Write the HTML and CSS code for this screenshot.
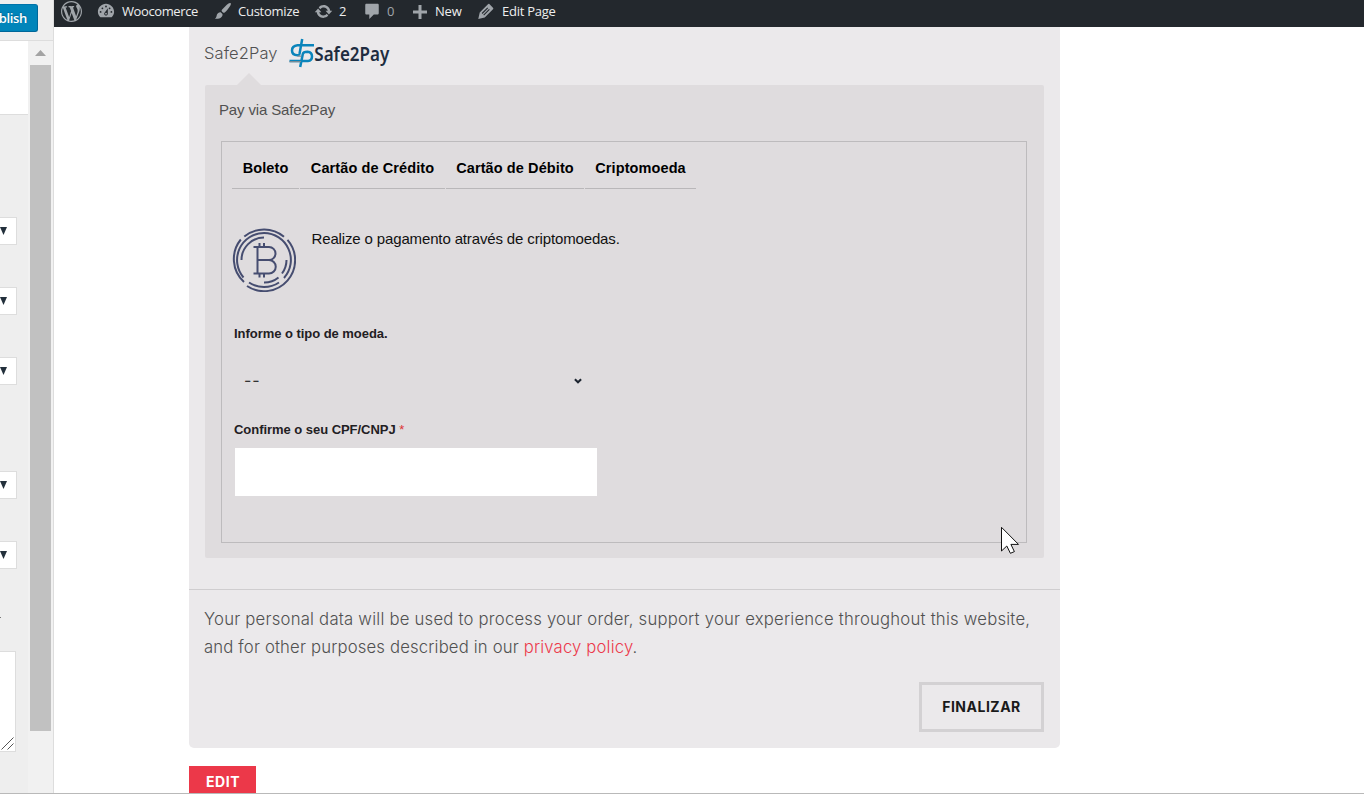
FILE: index.html
```html
<!DOCTYPE html>
<html lang="pt-BR">
<head>
<meta charset="utf-8">
<title>Checkout – Woocomerce</title>
<link rel="stylesheet" href="styles.css">
</head>
<body>
<div class="app">
  <aside class="sidebar">
    <header class="side-head"><button class="publish">Publish</button></header>
    <div class="side-body">
      <div class="controls">
        <div class="intro"></div>
        <div class="select s1"><svg viewBox="0 0 7 8"><path d="M0 0h7L3.5 8z"/></svg></div>
        <div class="select s2"><svg viewBox="0 0 7 8"><path d="M0 0h7L3.5 8z"/></svg></div>
        <div class="select s2"><svg viewBox="0 0 7 8"><path d="M0 0h7L3.5 8z"/></svg></div>
        <div class="select s3"><svg viewBox="0 0 7 8"><path d="M0 0h7L3.5 8z"/></svg></div>
        <div class="select s2"><svg viewBox="0 0 7 8"><path d="M0 0h7L3.5 8z"/></svg></div>
        <div class="hint"></div>
        <div class="textarea"><svg viewBox="0 0 13 13"><path d="M.5 12.5l12-12M6.500 12.500l6-6"/></svg></div>
      </div>
      <div class="scroll">
        <svg class="up" viewBox="0 0 11 6"><path d="M0 6L5.500 0 11 6z"/></svg>
        <div class="thumb"></div>
      </div>
    </div>
  </aside>
  <div class="preview">
    <nav class="adminbar">
      <svg class="ic wp" viewBox="0 0 20 20"><path d="M20 10c0-5.510-4.490-10-10-10C4.480 0 0 4.490 0 10c0 5.520 4.480 10 10 10 5.510 0 10-4.480 10-10zM7.780 15.370L4.370 6.220c.55-.02 1.170-.08 1.170-.08.5-.06.44-1.130-.06-1.110 0 0-1.450.11-2.370.11-.18 0-.37 0-.58-.01C4.120 2.690 6.870 1.110 10 1.110c2.330 0 4.450.87 6.050 2.340-.68-.11-1.650.39-1.650 1.580 0 .74.45 1.360.9 2.100.35.61.55 1.360.55 2.460 0 1.490-1.400 5-1.400 5l-3.030-8.370c.54-.02.82-.17.82-.17.5-.05.44-1.250-.06-1.220 0 0-1.440.12-2.380.12-.87 0-2.330-.12-2.330-.12-.5-.03-.56 1.200-.06 1.220l.92.08 1.260 3.410zM17.410 10c.24-.64.74-1.870.43-4.250.7 1.290 1.050 2.710 1.050 4.250 0 3.290-1.730 6.240-4.400 7.780.97-2.590 1.940-5.200 2.920-7.780zM6.100 18.090C3.120 16.650 1.110 13.530 1.110 10c0-1.300.23-2.480.72-3.590C3.250 10.300 4.670 14.200 6.100 18.090zm4.030-6.630l2.580 6.980c-.86.29-1.760.45-2.710.45-.79 0-1.570-.11-2.290-.33.81-2.380 1.620-4.740 2.420-7.100z"/></svg>
      <svg class="ic dash" viewBox="0 0 20 20"><path fill-rule="evenodd" d="M3.760 17h12.480c1.340-1.630 2.760-3.800 2.760-6 0-4.940-4.070-9-9-9s-9 4.060-9 9c0 2.200 1.420 4.370 2.760 6zM10 4a1 1 0 110 2 1 1 0 010-2zM6 6a1 1 0 110 2 1 1 0 010-2zm8 0a1 1 0 110 2 1 1 0 010-2zM8.630 11.550L12 7v6c0 1.100-.9 2-2 2s-2-.9-2-2c0-.57.24-1.080.63-1.450zM4 10a1 1 0 110 2 1 1 0 010-2zm12 0a1 1 0 110 2 1 1 0 010-2zm-5 3a1 1 0 10-2 0 1 1 0 002 0z"/></svg>
      <span class="t-site">Woocomerce</span>
      <svg class="ic brush" viewBox="0 0 20 20"><path d="M18.300 1.200c.8.700.5 1.700-.2 2.900-1.600 2.600-4.200 5.900-6.200 7.600-.6.500-1.300.5-1.900 0l-1.200-1.200c-.5-.6-.5-1.200 0-1.800 2-2.200 5-5.300 7.300-7 .8-.6 1.600-1 2.200-.5zM7.400 11.300l2 2c.6 2.900-2.200 5.900-8.400 5.300 2-1.300 1.600-2.700 2.300-4.600.7-1.800 2.200-2.900 4.100-2.700z"/></svg>
      <span class="t-cust">Customize</span>
      <svg class="ic upd" viewBox="0 0 20 20"><path d="M10.200 3.280c3.530 0 6.430 2.610 6.920 6h2.080l-3.500 4-3.500-4h2.320c-.45-1.970-2.210-3.450-4.320-3.450-1.450 0-2.730.71-3.540 1.780L4.950 5.660C6.230 4.200 8.110 3.280 10.200 3.280zm-.4 13.440c-3.520 0-6.430-2.610-6.920-6H.8l3.500-4 3.500 4H5.480c.45 1.970 2.210 3.450 4.320 3.450 1.450 0 2.730-.71 3.540-1.780l1.710 1.950c-1.280 1.460-3.150 2.380-5.250 2.380z"/></svg>
      <span class="t-two">2</span>
      <svg class="ic com" viewBox="0 0 20 20"><path d="M4 2h12c1 0 1.500.6 1.500 1.500v9c0 1-.6 1.500-1.500 1.500h-4l-5 5v-5H4c-1 0-1.500-.6-1.500-1.500v-9C2.500 2.600 3 2 4 2z"/></svg>
      <span class="t-zero">0</span>
      <svg class="ic plus" viewBox="0 0 14 14"><path d="M5.500 0h3v5.500H14v3H8.500V14h-3V8.500H0v-3h5.500z"/></svg>
      <span class="t-new">New</span>
      <svg class="ic pen" viewBox="0 0 20 20"><path fill-rule="evenodd" d="M14.500 1.200l4.300 4.300c.6.600.5 1.400 0 1.900l-9.700 9.700-7.600 1.700 1.700-7.600 9.700-9.700c.5-.5 1.100-.8 1.600-.3zm-2.300 4l-6.700 6.700.9.900 6.700-6.700zm-3.900 9.500l6.700-6.700-.9-.9-6.700 6.700z"/></svg>
      <span class="t-edit">Edit Page</span>
    </nav>
    <main class="page">
      <section class="card">
        <div class="method">
          <span class="method-name">Safe2Pay</span>
          <svg class="logo" viewBox="0 0 108 32">
            <g fill="none" stroke="#0a84bb" stroke-width="2.500">
              <path d="M13.200 1L10.500 16Q10.200 17.200 8.500 17.200Q3 17.200 3 12.500T8.500 7.300H25"/>
              <path d="M.5 22.900H19Q23 22.700 23 18.500T18.500 13.800Q14.300 13.800 13.800 16L11.200 29"/>
              <path d="M.5 23.700h11.500M8.500 18.200h4" stroke="#7c8b94" stroke-width="1.200"/>
            </g>
            <text x="25.300" y="23" textLength="75" lengthAdjust="spacingAndGlyphs">Safe2Pay</text>
          </svg>
        </div>
        <svg class="notch" viewBox="0 0 24 12"><path d="M0 12L12 0l12 12z"/></svg>
        <div class="box">
          <p class="via">Pay via Safe2Pay</p>
          <div class="frame">
            <div class="tabs">
              <a class="tab a">Boleto</a><a class="tab b">Cartão de Crédito</a><a class="tab c">Cartão de Débito</a><a class="tab d">Criptomoeda</a>
            </div>
            <div class="crypto">
              <svg class="coin" viewBox="0 0 64 64">
                <path d="M12.300 8.500A31 31 0 0 1 52 8.700M55.500 11.800A31 31 0 0 1 15 58M8.800 11.500A31 31 0 0 0 12 54"/>
                <path d="M11.500 49.500A27 27 0 0 1 32 5A27 27 0 0 1 52 50M17 54.500A27 27 0 0 0 47 54.500"/>
                <path d="M9.500 32A22.500 22.500 0 0 1 32 9.500M54.500 32A22.500 22.500 0 0 1 50 45.500M46.500 49.500A22.500 22.500 0 0 1 32 54.500"/>
                <path d="M21.500 19H37a6.400 6.400 0 0 1 0 13H25.500M37 32a6.600 6.600 0 0 1 0 13.500H21.500M25.500 19v26.500M27.500 15v4M32 15v4M27.500 45.500v4M32 45.500v4"/>
              </svg>
              <p class="info">Realize o pagamento através de criptomoedas.</p>
            </div>
            <label class="lab coin-lab">Informe o tipo de moeda.</label>
            <div class="coin-select"><span>--</span><svg viewBox="0 0 8 6"><path d="M.9 1.200L4 4.300l3.100-3.100"/></svg></div>
            <label class="lab cpf-lab">Confirme o seu CPF/CNPJ <span class="req">*</span></label>
            <input class="cpf" type="text" aria-label="CPF/CNPJ">
          </div>
        </div>
        <div class="terms">
          <p class="l1">Your personal data will be used to process your order, support your experience throughout this website,</p>
          <p class="l2">and for other purposes described in our <a>privacy policy</a>.</p>
          <button class="finish"><span>FINALIZAR</span></button>
        </div>
      </section>
      <a class="edit">EDIT</a>
    </main>
  </div>
</div>
<div class="edge"></div>
<svg class="cursor" viewBox="0 0 19 28"><path d="M.5 1.300v23.700l5.300-5 3.600 7.300 4-1.700-3.500-7.200h7.600z"/></svg>
</body>
</html>
```
FILE: styles.css
```css
* { box-sizing: border-box; }
body { margin: 0; background: #fff; font-family: "Liberation Sans", Arial, sans-serif; overflow: hidden; }
p { margin: 0; }
svg { display: block; flex: none; }
.app { display: flex; height: 794px; overflow: hidden; }

/* Customizer sidebar */
.sidebar { width: 54px; flex: none; background: #eee; border-right: 1px solid #ddd; display: flex; flex-direction: column; }
.side-head { height: 41px; flex: none; border-bottom: 1px solid #ddd; padding-top: 4px; overflow: hidden; display: flex; justify-content: flex-end; padding-right: 15px; }
.publish { flex: none; height: 28px; width: 66px; border: 1px solid #006799; border-top-color: #0073aa; border-radius: 3px; background: #0085ba; color: #fff; font: 600 13px "Open Sans", sans-serif; letter-spacing: -.35px; padding: 0 10px 0 0; text-align: right; text-shadow: 0 -1px 1px #006799; }
.side-body { flex: 1; display: flex; }
.controls { width: 28px; }
.intro { height: 74px; background: #fff; border-bottom: 1px solid #ddd; }
.select { width: 17px; height: 28px; background: #fff; border: 1px solid #ddd; border-left: 0; padding-top: 9px; }
.select svg { width: 7px; height: 8px; fill: #23303c; }
.s1 { margin-top: 102px; }
.s2 { margin-top: 42px; }
.s3 { margin-top: 86px; }
.hint { width: 1px; height: 1px; background: #777; margin-top: 48px; }
.textarea { width: 16px; height: 101px; margin-top: 33px; background: #fff; border: 1px solid #ddd; border-left: 0; display: flex; align-items: flex-end; justify-content: flex-end; padding: 1px; }
.textarea svg { width: 13px; height: 13px; fill: none; stroke: #555; }
.scroll { flex: 1; background: #f1f1f1; padding: 9px 2px 0; }
.up { width: 11px; height: 6px; margin: 0 0 9px 5px; fill: #a3a3a3; }
.thumb { height: 666px; width: 21px; background: #c1c1c1; }

/* Admin bar */
.preview { flex: 1; min-width: 0; }
.adminbar { height: 27px; background: #23282d; display: flex; align-items: flex-start; color: #eee; font: 500 13px/23px "Open Sans", sans-serif; white-space: nowrap; }
.adminbar span { flex: none; }
.ic { fill: #a0a5aa; width: 18px; height: 18px; margin-top: 2px; }
.wp { width: 21px; height: 21px; margin: 1px 15px 0 7px; }
.t-site { width: 76px; margin: 0 16px 0 7px; letter-spacing: -.4px; }
.t-cust { width: 61px; margin: 0 15px 0 6px; letter-spacing: -.25px; }
.upd { width: 19px; height: 19px; }
.t-two { width: 8px; margin: 0 16px 0 6px; }
.t-zero { width: 8px; margin: 0 18px 0 6px; color: #a0a5aa; }
.plus { width: 14px; height: 14px; margin-top: 5px; }
.t-new { width: 27px; margin: 0 15px 0 8px; letter-spacing: -.2px; }
.pen { width: 17px; height: 17px; margin-top: 3px; }
.t-edit { margin-left: 8px; letter-spacing: -.25px; }

/* Checkout */
.page { padding-left: 135px; }
.card { width: 871px; height: 721px; background: #ebe9eb; border-radius: 0 0 5px 5px; }
.method { height: 47px; padding-left: 15px; display: flex; color: #515151; }
.method-name { width: 85px; font: 300 16.500px/52px Inter, sans-serif; letter-spacing: .1px; white-space: nowrap; }
.logo { width: 108px; height: 32px; margin-top: 11px; }
.logo text { font: 600 19px "Noto Sans", sans-serif; fill: #202c3f; }
.notch { width: 24px; height: 12px; margin-left: 48px; margin-top: -1px; fill: #dfdcde; }
.box { width: 839px; height: 473px; margin-left: 16px; padding: 13px 17px 0 16px; background: #dfdcde; border-radius: 2px; }
.via { margin-left: -2px; height: 43px; font-size: 15px; line-height: 24px; letter-spacing: -.15px; color: #515151; }
.frame { height: 402px; border: 1px solid #bdbbbd; padding: 9px 0 0 9px; }
.tabs { display: flex; gap: 1px; height: 38px; }
.tab { border-bottom: 1px solid #b9b7b9; color: #000; text-align: center; font-weight: 700; font-size: 14.500px; line-height: 34px; letter-spacing: .1px; white-space: nowrap; }
.tab.a { width: 67px; margin-left: 1px; }
.tab.b { width: 145px; }
.tab.c { width: 138px; }
.tab.d { width: 111px; }
.crypto { display: flex; padding: 39px 0 0 1px; height: 130px; }
.coin { width: 64px; height: 64px; fill: none; stroke: #464d70; stroke-width: 2; }
.info { margin-left: 15.500px; font-size: 15px; line-height: 22px; letter-spacing: -.14px; color: #111; white-space: nowrap; }
.lab { display: block; margin-left: 3px; font-size: 13px; line-height: 20px; color: #1f2023; font-weight: 700; letter-spacing: -.04px; }
.coin-lab { margin-top: 5px; }
.coin-select { width: 362px; height: 48px; margin: 12px 0 16px 4px; padding: 0 15px 0 9px; display: flex; align-items: center; justify-content: space-between; font: 400 16px Inter, sans-serif; letter-spacing: 1px; color: #333; }
.coin-select svg { width: 8px; height: 6px; margin-top: 2px; fill: none; stroke: #1d2530; stroke-width: 2; }
.req { color: #d33; font-weight: 400; }
.cpf { display: block; width: 362px; height: 48px; margin: 8px 0 0 4px; border: 0; background: #fff; padding: 0 10px; }
.terms { margin-top: 31px; border-top: 1px solid #cfcdcf; padding: 15px 16px 0 15px; font: 300 16.700px/28px Inter, sans-serif; color: #515151; white-space: nowrap; }
.l1 { letter-spacing: .22px; }
.l2 { letter-spacing: .16px; }
.terms a { color: #eb3a4c; }
.finish { display: flex; align-items: center; justify-content: center; width: 125px; height: 50px; margin: 21px 0 0 auto; padding: 0 6px 2px; border: 3px solid #d3d1d3; background: transparent; font: 700 14px Inter, sans-serif; letter-spacing: .5px; color: #1a1a1a; }
.edit { display: block; width: 67px; height: 30px; margin-top: 18px; padding-left: 17px; background: #ec3849; color: #fff; font: 700 14px/32px Inter, sans-serif; letter-spacing: .6px; }

/* Overlays */
.edge { position: absolute; left: 0; top: 793px; width: 1364px; height: 1px; background: #b9b9b9; }
.cursor { position: absolute; left: 1001px; top: 526px; width: 19px; height: 28px; fill: #fff; stroke: #111; stroke-width: 1; }
```
